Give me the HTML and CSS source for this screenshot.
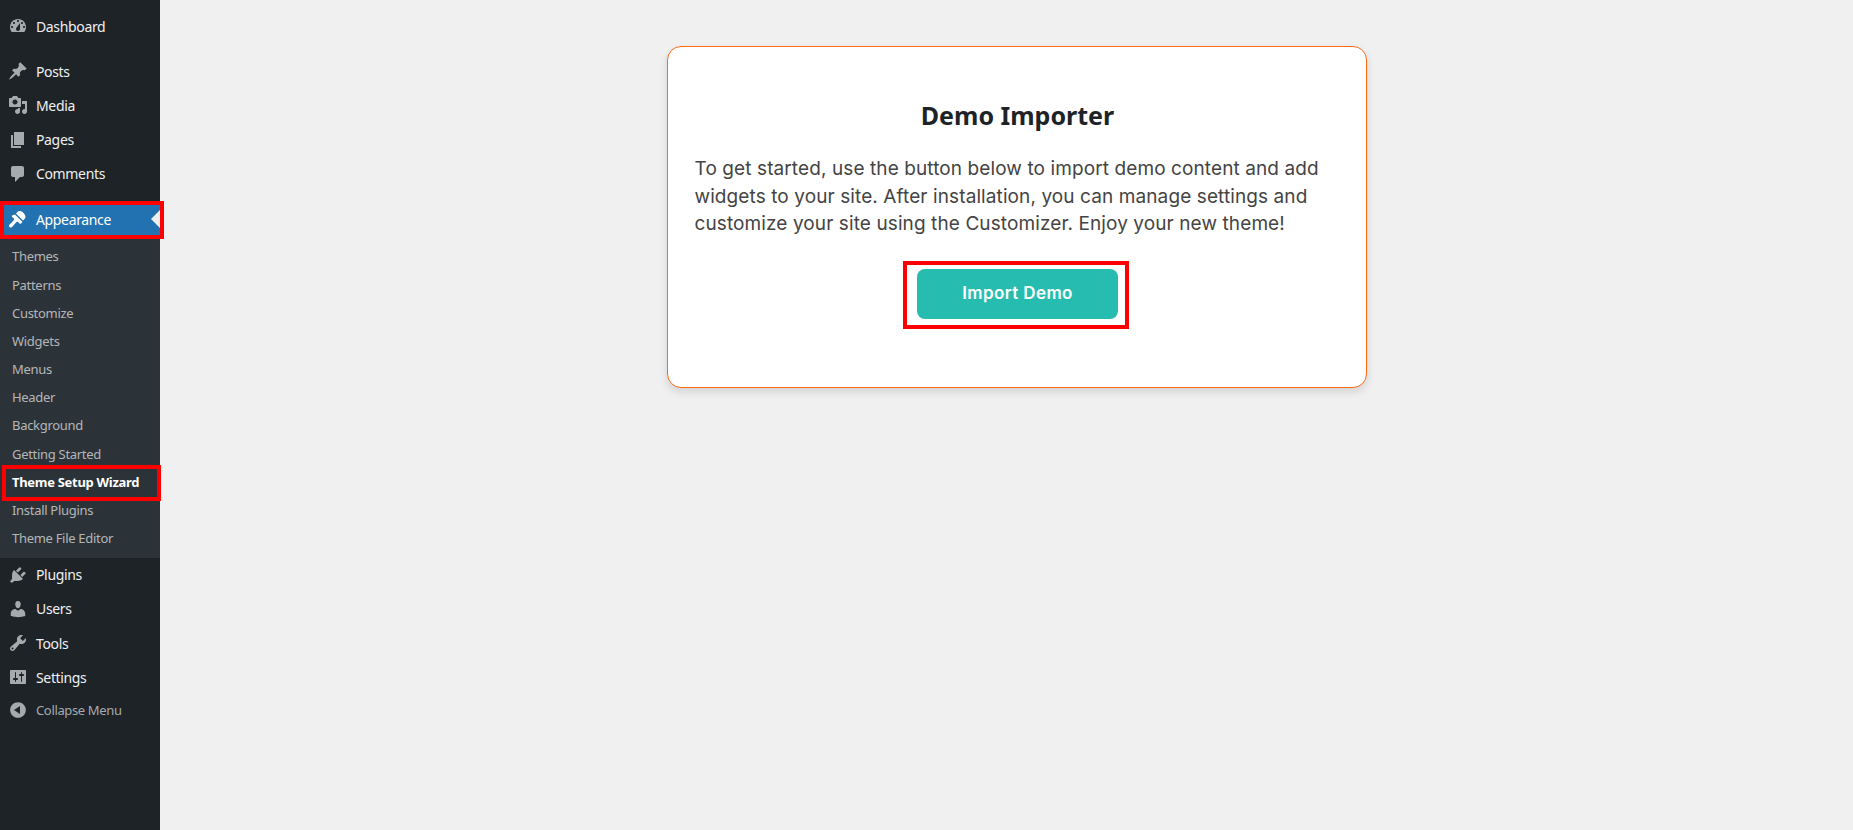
FILE: index.html
```html
<!DOCTYPE html>
<html lang="en">
<head>
  <meta charset="UTF-8">
  <title>Demo Importer</title>
  <link rel="stylesheet" href="styles.css">
</head>
<body>
  <nav class="adminmenu">
    <ul class="menu">
      <li class="item item-first">
        <svg class="icon" viewBox="0 0 20 20"><path fill-rule="evenodd" d="M3.76 16h12.48c1.1-1.37 1.76-3.11 1.76-5 0-4.42-3.58-8-8-8s-8 3.58-8 8c0 1.89.66 3.63 1.76 5zM10 4c.55 0 1 .45 1 1s-.45 1-1 1-1-.45-1-1 .45-1 1-1zM6 6c.55 0 1 .45 1 1s-.45 1-1 1-1-.45-1-1 .45-1 1-1zm8 0c.55 0 1 .45 1 1s-.45 1-1 1-1-.45-1-1 .45-1 1-1zm-5.37 5.55L12 7v6c0 1.1-.9 2-2 2s-2-.9-2-2c0-.57.24-1.08.63-1.45zM4 10c.55 0 1 .45 1 1s-.45 1-1 1-1-.45-1-1 .45-1 1-1zm12 0c.55 0 1 .45 1 1s-.45 1-1 1-1-.45-1-1 .45-1 1-1z"/></svg>
        <span>Dashboard</span>
      </li>
      <li class="item">
        <svg class="icon" viewBox="0 0 20 20"><path d="M10.44 3.02l1.82-1.82 6.36 6.35-1.83 1.82c-1.05-.68-2.48-.57-3.41.36l-.75.75c-.92.93-1.04 2.35-.35 3.41l-1.83 1.82-2.41-2.41-2.8 2.79c-.42.42-3.38 2.71-3.8 2.29s1.86-3.39 2.28-3.81l2.79-2.79L4.1 9.36l1.83-1.82c1.05.69 2.48.57 3.4-.36l.75-.75c.93-.92 1.05-2.35.36-3.41z"/></svg>
        <span>Posts</span>
      </li>
      <li class="item">
        <svg class="icon" viewBox="0 0 20 20"><path fill-rule="evenodd" d="M13 11V4c0-.55-.45-1-1-1h-1.67L9 1H5L3.67 3H2c-.55 0-1 .45-1 1v7c0 .55.45 1 1 1h10c.55 0 1-.45 1-1zM7 4.5c1.38 0 2.5 1.12 2.5 2.5S8.38 9.5 7 9.5 4.5 8.38 4.5 7 5.62 4.5 7 4.5zM14 6h5v10.5c0 1.38-1.12 2.5-2.5 2.5S14 17.88 14 16.5s1.12-2.5 2.5-2.5c.17 0 .34.02.5.05V9h-3V6zm-4 8.05V13h2v3.5c0 1.38-1.12 2.5-2.5 2.5S7 17.88 7 16.5 8.12 14 9.5 14c.17 0 .34.02.5.05z"/></svg>
        <span>Media</span>
      </li>
      <li class="item">
        <svg class="icon" viewBox="0 0 20 20"><path d="M6 15V2h10v13H6zm-1 1h8v2H3V5h2v11z"/></svg>
        <span>Pages</span>
      </li>
      <li class="item">
        <svg class="icon" viewBox="0 0 20 20"><path d="M5 2h9c1.1 0 2 .9 2 2v7c0 1.1-.9 2-2 2h-2l-5 5v-5H5c-1.1 0-2-.9-2-2V4c0-1.1.9-2 2-2z"/></svg>
        <span>Comments</span>
      </li>
      <li class="item-open">
        <div class="item item-current">
          <svg class="icon" viewBox="0 0 20 20"><path d="M8 4.5l2-2c1-.8 3.5-.5 5.5 1.5s2.5 4 1.5 5.5l-2 2zM7 5.5l7.5 7.5-1.5 1.5c-.5.4-1 .4-1.5 0L10 13c-.5-.4-1-.4-1.5 0L4 18c-.8.8-2 .6-2.5 0s-.8-1.7 0-2.5L6 11c.4-.5.4-1 0-1.5L4 8c-.4-.5-.4-1 0-1.5z"/></svg>
          <span>Appearance</span>
          <i class="arrow"></i>
          <b class="mark mark-appearance"></b>
        </div>
        <ul class="submenu">
          <li class="subitem">Themes</li>
          <li class="subitem">Patterns</li>
          <li class="subitem">Customize</li>
          <li class="subitem">Widgets</li>
          <li class="subitem">Menus</li>
          <li class="subitem">Header</li>
          <li class="subitem">Background</li>
          <li class="subitem">Getting Started</li>
          <li class="subitem subitem-current">Theme Setup Wizard<b class="mark mark-wizard"></b></li>
          <li class="subitem">Install Plugins</li>
          <li class="subitem">Theme File Editor</li>
        </ul>
      </li>
      <li class="item">
        <svg class="icon" viewBox="0 0 20 20"><path d="M13.11 4.36L9.87 7.6 8 5.73l3.24-3.24c.35-.34 1.05-.2 1.56.32.52.51.66 1.21.31 1.55zm-8 1.77l.91-1.12 9.01 9.01-1.19.84c-.71.71-2.63 1.16-3.82 1.16H6.14L4.9 17.26c-.59.59-1.54.59-2.12 0-.59-.58-.59-1.53 0-2.12l1.24-1.24v-3.88c0-1.13.4-3.14 1.09-3.89zm7.26 3.97l3.24-3.24c.34-.35 1.04-.21 1.55.31.52.51.66 1.21.31 1.55l-3.24 3.25z"/></svg>
        <span>Plugins</span>
      </li>
      <li class="item">
        <svg class="icon" viewBox="0 0 20 20"><path d="M10 9.25c-2.27 0-2.73-3.44-2.73-3.44C7 4.02 7.82 2 9.97 2c2.16 0 2.98 2.02 2.71 3.81 0 0-.41 3.44-2.68 3.44zm0 2.57L12.72 10c2.39 0 4.52 2.33 4.52 4.53v2.49s-3.65 1.13-7.24 1.13c-3.65 0-7.24-1.13-7.24-1.13v-2.49c0-2.25 1.94-4.48 4.47-4.48z"/></svg>
        <span>Users</span>
      </li>
      <li class="item">
        <svg class="icon" viewBox="0 0 20 20"><path fill-rule="evenodd" d="M16.68 9.77c-1.34 1.34-3.3 1.67-4.95.99l-5.41 6.52c-.99.99-2.59.99-3.58 0s-.99-2.59 0-3.57l6.52-5.42c-.68-1.65-.35-3.61.99-4.95 1.28-1.28 3.12-1.62 4.72-1.06l-2.89 2.89 2.82 2.82 2.86-2.87c.53 1.58.18 3.4-1.08 4.67zM3.81 16.21c.4.39 1.04.39 1.43 0 .4-.4.4-1.04 0-1.43-.39-.4-1.03-.4-1.43 0-.39.39-.39 1.03 0 1.43z"/></svg>
        <span>Tools</span>
      </li>
      <li class="item">
        <svg class="icon" viewBox="0 0 20 20"><path fill-rule="evenodd" d="M18 16V4c0-.55-.45-1-1-1H3c-.55 0-1 .45-1 1v12c0 .55.45 1 1 1h14c.55 0 1-.45 1-1zM8 11h1c.55 0 1 .45 1 1s-.45 1-1 1H8v1.5c0 .28-.22.5-.5.5s-.5-.22-.5-.5V13H6c-.55 0-1-.45-1-1s.45-1 1-1h1V5.5c0-.28.22-.5.5-.5s.5.22.5.5V11zm5-2h-1c-.55 0-1-.45-1-1s.45-1 1-1h1V5.5c0-.28.22-.5.5-.5s.5.22.5.5V7h1c.55 0 1 .45 1 1s-.45 1-1 1h-1v5.5c0 .28-.22.5-.5.5s-.5-.22-.5-.5V9z"/></svg>
        <span>Settings</span>
      </li>
      <li class="item item-collapse">
        <svg class="icon" viewBox="0 0 20 20"><path fill-rule="evenodd" d="M10 2.16c4.33 0 7.84 3.51 7.84 7.84s-3.51 7.84-7.84 7.84S2.16 14.33 2.16 10 5.67 2.16 10 2.16zM12 14V6l-6 4z"/></svg>
        <span>Collapse Menu</span>
      </li>
    </ul>
  </nav>

  <main class="content">
    <section class="card">
      <h1 class="card-title">Demo Importer</h1>
      <p class="card-text">To get started, use the button below to import demo content and add widgets to your site. After installation, you can manage settings and customize your site using the Customizer. Enjoy your new theme!</p>
      <div class="card-action">
        <a class="button" href="#">Import Demo<b class="mark mark-button"></b></a>
      </div>
    </section>
  </main>
</body>
</html>
```

FILE: styles.css
```css
html, body {
  height: 100%;
}
body {
  margin: 0;
  display: flex;
  background-color: #f0f0f1;
  font-family: "Noto Sans", Arial, sans-serif;
  overflow: hidden;
}
ul {
  list-style: none;
  margin: 0;
  padding: 0;
}

/* sidebar */
.adminmenu {
  width: 160px;
  flex: none;
  background-color: #1d2327;
  padding-top: 9px;
  box-sizing: border-box;
}
.item {
  position: relative;
  display: flex;
  align-items: center;
  height: 34.2px;
  font-size: 14px;
  letter-spacing: -0.35px;
  color: #f0f0f1;
}
.item-first {
  margin-bottom: 11px;
}
.item-open {
  margin-top: 11px;
}
.icon {
  width: 20px;
  height: 20px;
  margin: 0 8px;
  flex: none;
  fill: #a7aaad;
}
.item-current {
  background-color: #2271b1;
  color: #fff;
}
.item-current .icon {
  fill: #fff;
}
.arrow {
  position: absolute;
  right: 0;
  top: 8px;
  border: 9px solid transparent;
  border-right-color: #f0f0f1;
  border-left-width: 0;
}
.item-collapse {
  font-size: 13px;
  color: #a7aaad;
  height: 31px;
}
.submenu {
  background-color: #2c3338;
  padding: 6.2px 0 5.3px;
}
.subitem {
  position: relative;
  height: 28.2px;
  line-height: 28.2px;
  padding-left: 12px;
  font-size: 13px;
  letter-spacing: -0.3px;
  color: #c3c4c7;
  opacity: 0.9;
}
.subitem-current {
  font-weight: bold;
  color: #fff;
  opacity: 1;
}

/* red highlight boxes */
.mark {
  position: absolute;
  border: 4px solid #ff0000;
  box-sizing: border-box;
  pointer-events: none;
}
.mark-appearance {
  left: 0;
  right: -4px;
  top: -0.5px;
  bottom: -2.5px;
}
.mark-wizard {
  left: 2px;
  right: -1px;
  top: -2.7px;
  bottom: -5.1px;
}
.mark-button {
  left: -14px;
  right: -11px;
  top: -8px;
  bottom: -10px;
}

/* main area */
.content {
  flex: 1;
  padding: 46px 0 0 20px;
  display: flex;
  justify-content: center;
  align-items: flex-start;
}
.card {
  width: 700px;
  height: 342px;
  box-sizing: border-box;
  padding: 49px 25px 0 27px;
  background-color: #fff;
  border: 1px solid #ff6a13;
  border-radius: 14px;
  box-shadow: 0 4px 8px rgba(0, 0, 0, 0.12);
}
.card-title {
  margin: 0 0 21px;
  text-align: center;
  font-size: 25px;
  line-height: 38px;
  font-weight: bold;
  color: #1d2327;
}
.card-text {
  margin: 0 0 31px;
  font-family: Inter, Arial, sans-serif;
  font-size: 19px;
  letter-spacing: 0.1px;
  line-height: 27.6px;
  color: #444;
}
.card-action {
  display: flex;
  justify-content: center;
}
.button {
  position: relative;
  display: block;
  width: 201px;
  height: 50px;
  line-height: 48px;
  text-align: center;
  background-color: #26bdb0;
  border-radius: 8px;
  color: #fff;
  font-family: Inter, Arial, sans-serif;
  font-size: 17px;
  letter-spacing: 0.4px;
  font-weight: 600;
  text-decoration: none;
}
```
